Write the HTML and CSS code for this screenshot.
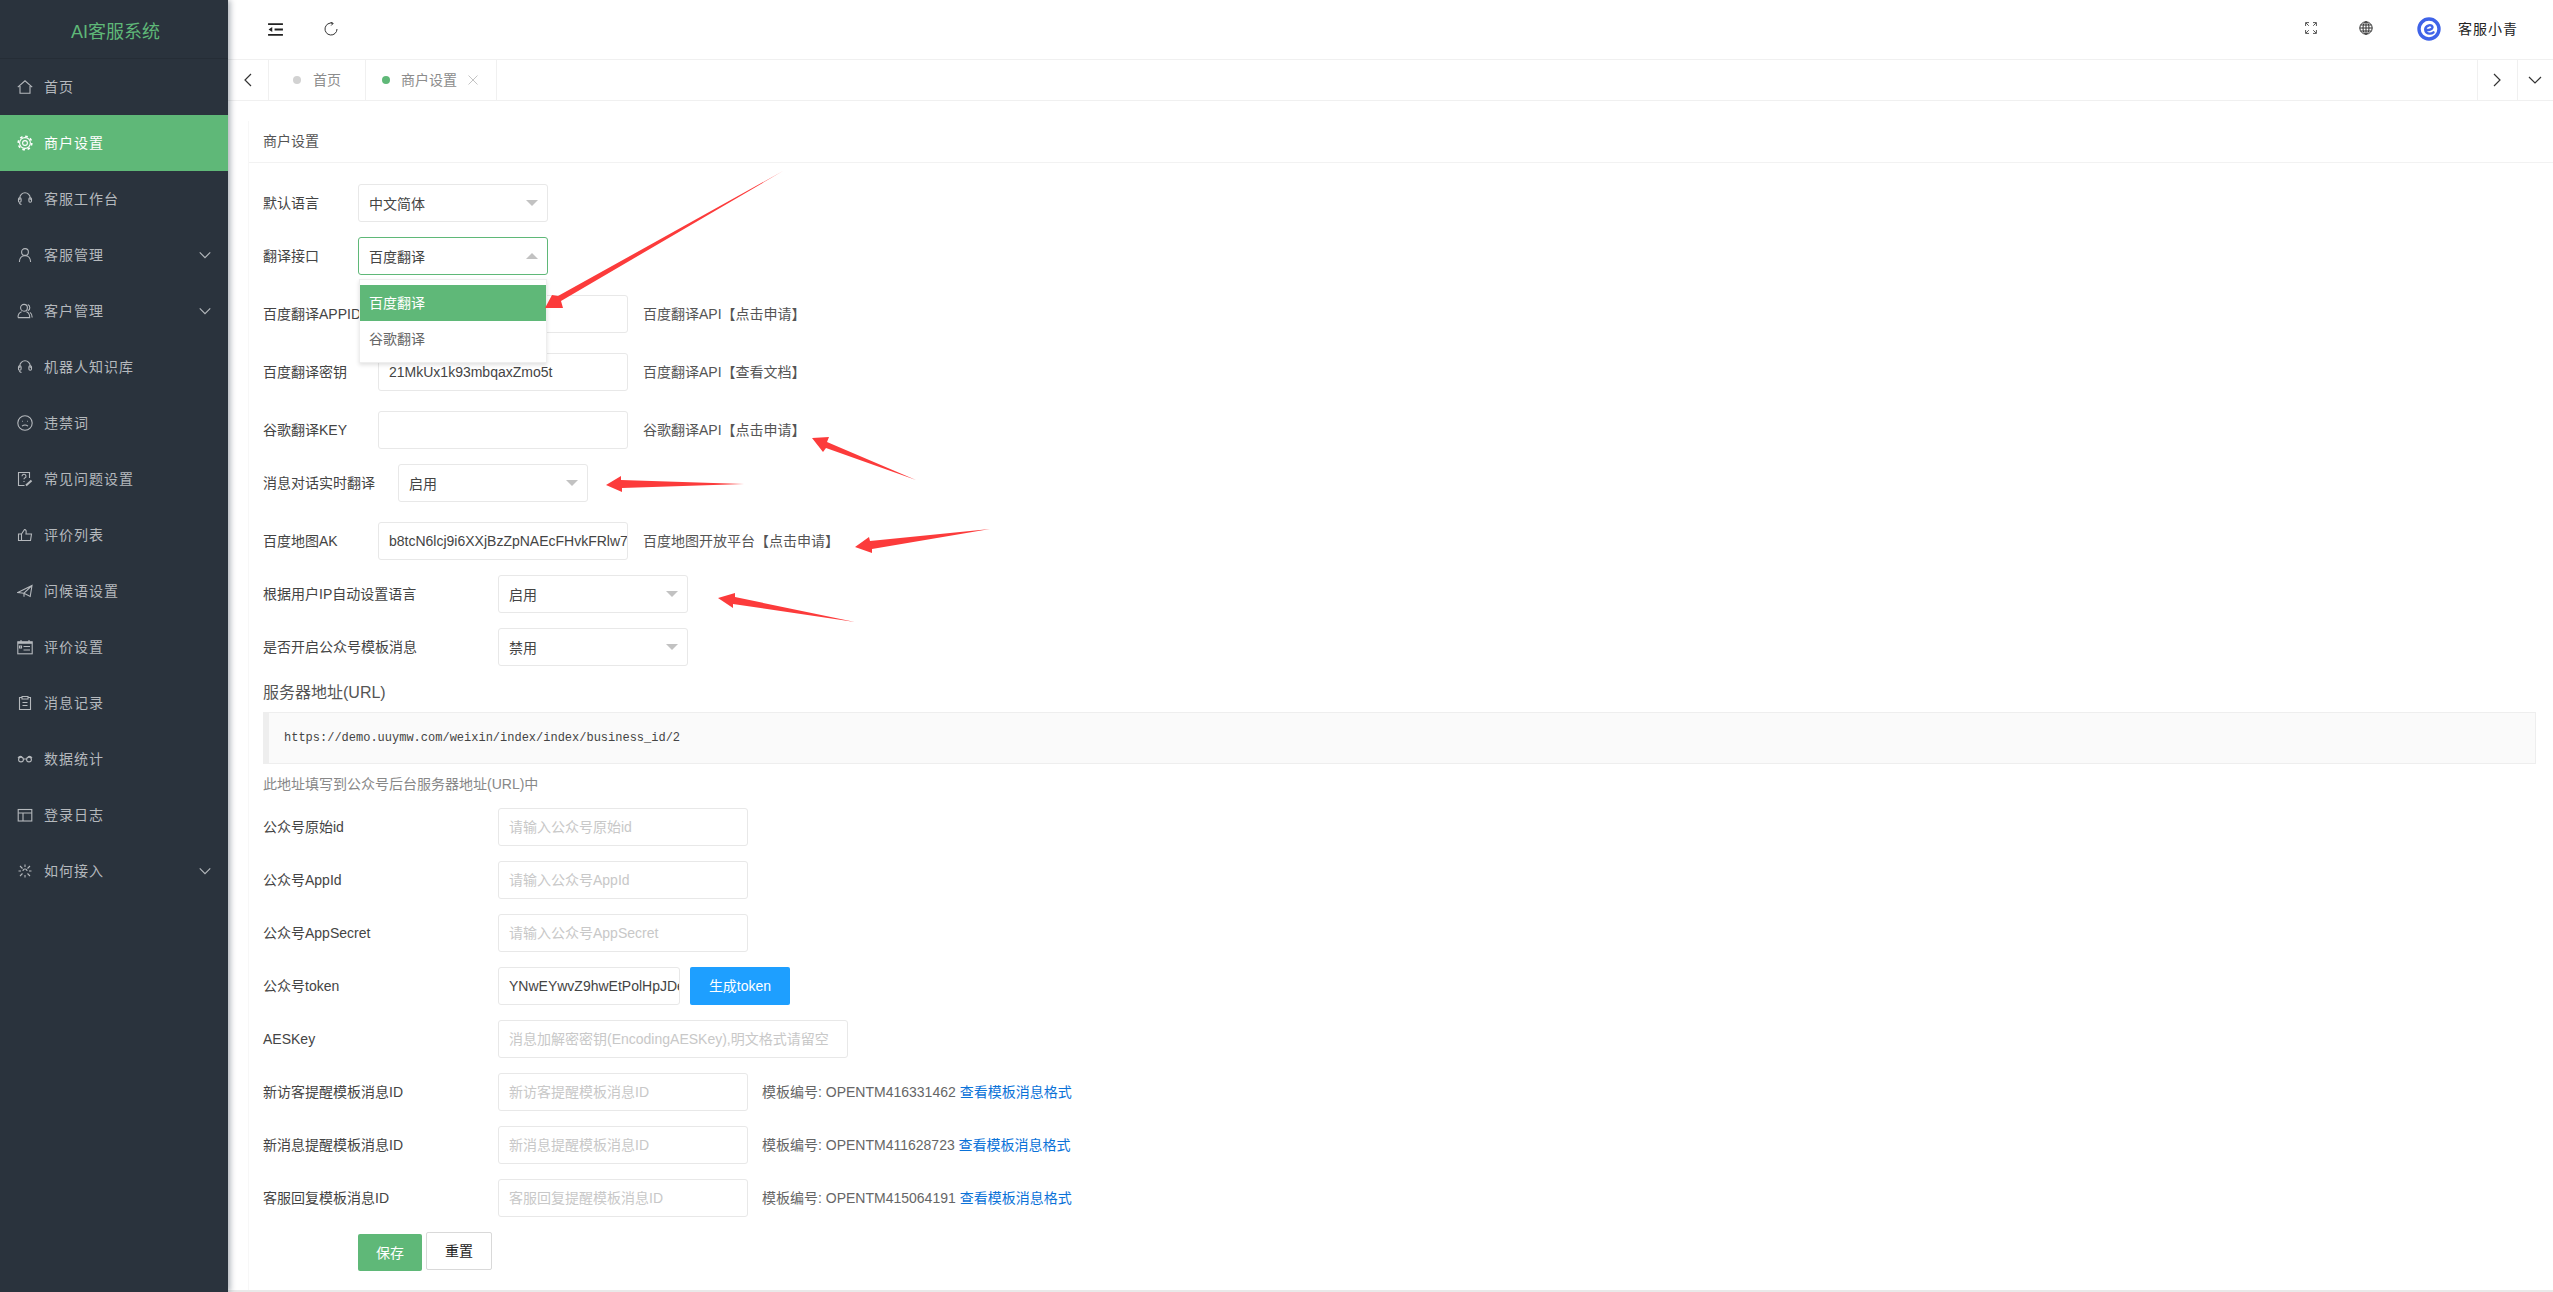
FILE: index.html
```html
<!DOCTYPE html>
<html lang="zh-CN">
<head>
<meta charset="utf-8">
<title>商户设置</title>
<link rel="stylesheet" href="styles.css">
</head>
<body>
<aside class="sidebar">
  <div class="brand">AI客服系统</div>
  <nav class="menu">
    <a class="item"><svg class="ic" viewBox="0 0 16 16"><path d="M.8 8.2 8 1.8l7.2 6.4M3 7v7.2h10V7"/></svg><span class="item-text">首页</span></a>
    <a class="item active"><svg class="ic" viewBox="0 0 16 16"><circle cx="8" cy="8" r="5.4"/><circle cx="8" cy="8" r="6.8" stroke-width="1.6" stroke-dasharray="2.6 2.74"/><circle cx="8" cy="8" r="2.4"/></svg><span class="item-text">商户设置</span></a>
    <a class="item"><svg class="ic" viewBox="0 0 16 16"><path d="M2.8 9V7a5.2 5.2 0 0 1 10.4 0v2M4.5 13.500c-1-.2-1.700-.7-2.200-1.500"/><rect x="1.500" y="6.800" width="2.600" height="4.400" rx="1.200"/><rect x="11.900" y="6.800" width="2.600" height="4.400" rx="1.200"/></svg><span class="item-text">客服工作台</span></a>
    <a class="item"><svg class="ic" viewBox="0 0 16 16"><circle cx="8" cy="5" r="3.400"/><path d="M2.400 15c0-3.800 2.300-6.400 5.600-6.400s5.600 2.600 5.600 6.400"/></svg><span class="item-text">客服管理</span><svg class="chev" viewBox="0 0 16 16"><path d="M2 5l6 6 6-6"/></svg></a>
    <a class="item"><svg class="ic" viewBox="0 0 16 16"><circle cx="7" cy="4.800" r="3.400"/><path d="M1 14.600c0-3 1.800-5.200 3.600-5.800M9.400 8.800c2 .6 3.300 3 3.300 5.800H1M10.800 1.600a3.400 3.400 0 0 1 0 6.200M13 9.400c1.400.9 2.200 2.800 2.200 5.200"/></svg><span class="item-text">客户管理</span><svg class="chev" viewBox="0 0 16 16"><path d="M2 5l6 6 6-6"/></svg></a>
    <a class="item"><svg class="ic" viewBox="0 0 16 16"><path d="M2.800 9V7a5.200 5.200 0 0 1 10.400 0v2M4.500 13.500c-1-.2-1.700-.7-2.200-1.500"/><rect x="1.500" y="6.800" width="2.600" height="4.400" rx="1.200"/><rect x="11.900" y="6.800" width="2.600" height="4.400" rx="1.200"/></svg><span class="item-text">机器人知识库</span></a>
    <a class="item"><svg class="ic" viewBox="0 0 16 16"><circle cx="8" cy="8" r="7.200"/><path d="M5 11.200c1.800-1.500 4.200-1.500 6 0M5.200 6.200h.8M10 6.200h.8"/></svg><span class="item-text">违禁词</span></a>
    <a class="item"><svg class="ic" viewBox="0 0 16 16"><path d="M12.500 7V1.500h-11v13h6M5 5.200a2 2 0 1 1 2.700 1.900c-.5.2-.7.5-.7 1.200M7 10v1"/><path d="M9 14.500l5.500-5" stroke-width="2"/></svg><span class="item-text">常见问题设置</span></a>
    <a class="item"><svg class="ic" viewBox="0 0 16 16"><path d="M1.500 7h3v6.500h-3zM4.500 7l3-4.500c1.500 0 2 1 1.500 4.500h5.500l-1 6.500h-9"/></svg><span class="item-text">评价列表</span></a>
    <a class="item"><svg class="ic" viewBox="0 0 16 16"><path d="M.8 9.500 15 2.500l-1.800 11L7 10.200zM7 10.200l8-7.700M7 10.200v3.500"/></svg><span class="item-text">问候语设置</span></a>
    <a class="item"><svg class="ic" viewBox="0 0 16 16"><rect x=".8" y="2.800" width="14.400" height="12"/><path d="M.8 3.800h14.400" stroke-width="2"/><path d="M4 1v2M12 1v2M6.500 7.500h6.500M6.500 11h6.500M2.500 7h2v2h-2z"/></svg><span class="item-text">评价设置</span></a>
    <a class="item"><svg class="ic" viewBox="0 0 16 16"><path d="M5 2.500H2.500v12h11v-12H11M5 1.500h6v2.500H5zM5.500 7.500h5M5.500 10.500h5"/></svg><span class="item-text">消息记录</span></a>
    <a class="item"><svg class="ic" viewBox="0 0 16 16"><circle cx="4" cy="8.500" r="2.400"/><circle cx="12" cy="8.500" r="2.400"/><path d="M6.400 8h3.200M1 7c1-1.500 2.500-2 4-1.200M11 5.800c1.500-.8 3-.3 4 1.200"/></svg><span class="item-text">数据统计</span></a>
    <a class="item"><svg class="ic" viewBox="0 0 16 16"><rect x="1.200" y="2.500" width="13.600" height="11.500"/><path d="M1.200 6h13.600M6 6v8"/></svg><span class="item-text">登录日志</span></a>
    <a class="item"><svg class="ic" viewBox="0 0 16 16"><path d="M3 3l2.500 2.500M13 3l-2.500 2.500M3 13l2.500-2.500M13 13l-2.500-2.500M8 1.500v2.500M1.500 8H4M12 8h2.500M8 12v2.500M6 8a2 2 0 0 1 4 0"/></svg><span class="item-text">如何接入</span><svg class="chev" viewBox="0 0 16 16"><path d="M2 5l6 6 6-6"/></svg></a>
  </nav>
</aside>

<main class="main">
  <header class="topbar">
    <div class="top-left">
      <svg class="tool-collapse" viewBox="0 0 16 14"><path class="thick" d="M0 1.200h16M0 12.800h16M7 7h9"/><path class="solid" d="M4.500 4.200v5.600L.5 7z"/></svg>
      <svg class="tool-refresh" viewBox="0 0 14 14"><path d="M8.800 1.300A6 6 0 1 0 13 7"/><path d="M6.500.2 9.200 1.400 7.200 3.500"/></svg>
    </div>
    <div class="top-right">
      <svg class="tool-full" viewBox="0 0 12 12"><path d="M.6 4V.6H4M.8.8l3 3M8 .6h3.400V4M11.200.8l-3 3M.6 8v3.400H4M.8 11.200l3-3M8 11.400h3.400V8M11.200 11.200l-3-3"/></svg>
      <svg class="tool-globe" viewBox="0 0 14 14"><circle cx="7" cy="7" r="6.200"/><ellipse cx="7" cy="7" rx="3" ry="6.200"/><path d="M7 .8v12.400M.8 7h12.400M1.600 4h10.800M1.600 10h10.800"/></svg>
      <svg class="avatar" viewBox="0 0 24 24"><circle cx="12" cy="12" r="10" class="ring"/><path class="swirl" d="M8.500 12.800c2.500.6 6.500.1 7-2.200.3-1.700-1.700-2.800-3.500-2.300-2.200.6-3.800 2.200-3.800 4.300 0 2.400 2.100 4 4.500 4 1.500 0 2.800-.4 3.800-1.300"/></svg>
      <span class="username">客服小青</span>
    </div>
  </header>

  <div class="tabs">
    <div class="tab-arrow"><svg class="tab-chev" viewBox="0 0 12 16"><path d="M9 2 3 8l6 6"/></svg></div>
    <div class="tab"><i class="dot"></i><span>首页</span></div>
    <div class="tab tab-current"><i class="dot dot-on"></i><span>商户设置</span><svg class="tab-x" viewBox="0 0 10 10"><path d="M.5.500l9 9M9.500.500l-9 9"/></svg></div>
    <div class="tab-space"></div>
    <div class="tab-arrow tab-arrow-r"><svg class="tab-chev" viewBox="0 0 12 16"><path d="M3 2l6 6-6 6"/></svg></div>
    <div class="tab-arrow tab-arrow-d"><svg class="tab-chev-d" viewBox="0 0 16 12"><path d="M2 3l6 6 6-6"/></svg></div>
  </div>

  <div class="content">
    <section class="panel">
      <div class="panel-head">商户设置</div>
      <div class="panel-body">
        <div class="row"><label class="lab w95">默认语言</label><div class="select"><span>中文简体</span><i class="tri"></i></div></div>

        <div class="row row-lg"><label class="lab w95">翻译接口</label>
          <div class="select select-open"><span>百度翻译</span><i class="tri tri-up"></i>
            <ul class="drop"><li class="opt opt-on">百度翻译</li><li class="opt">谷歌翻译</li></ul>
          </div>
        </div>

        <div class="row row-lg"><label class="lab w115">百度翻译APPID</label><input class="inp" type="text"><span class="aside-note">百度翻译API【点击申请】</span></div>
        <div class="row row-lg"><label class="lab w115">百度翻译密钥</label><input class="inp" type="text" value="21MkUx1k93mbqaxZmo5t"><span class="aside-note">百度翻译API【查看文档】</span></div>
        <div class="row"><label class="lab w115">谷歌翻译KEY</label><input class="inp" type="text"><span class="aside-note">谷歌翻译API【点击申请】</span></div>
        <div class="row row-lg"><label class="lab w135">消息对话实时翻译</label><div class="select"><span>启用</span><i class="tri"></i></div></div>
        <div class="row"><label class="lab w115">百度地图AK</label><input class="inp" type="text" value="b8tcN6lcj9i6XXjBzZpNAEcFHvkFRlw7"><span class="aside-note">百度地图开放平台【点击申请】</span></div>
        <div class="row"><label class="lab w235">根据用户IP自动设置语言</label><div class="select"><span>启用</span><i class="tri"></i></div></div>
        <div class="row row-end"><label class="lab w235">是否开启公众号模板消息</label><div class="select"><span>禁用</span><i class="tri"></i></div></div>

        <h3 class="sec-title">服务器地址(URL)</h3>
        <pre class="code">https://demo.uuymw.com/weixin/index/index/business_id/2</pre>
        <p class="tip">此地址填写到公众号后台服务器地址(URL)中</p>

        <div class="row"><label class="lab w235">公众号原始id</label><input class="inp" type="text" placeholder="请输入公众号原始id"></div>
        <div class="row"><label class="lab w235">公众号AppId</label><input class="inp" type="text" placeholder="请输入公众号AppId"></div>
        <div class="row"><label class="lab w235">公众号AppSecret</label><input class="inp" type="text" placeholder="请输入公众号AppSecret"></div>
        <div class="row"><label class="lab w235">公众号token</label><input class="inp inp-token" type="text" value="YNwEYwvZ9hwEtPolHpJDeKmZ"><button class="btn btn-blue" type="button">生成token</button></div>
        <div class="row"><label class="lab w235">AESKey</label><input class="inp inp-wide" type="text" placeholder="消息加解密密钥(EncodingAESKey),明文格式请留空"></div>
        <div class="row"><label class="lab w235">新访客提醒模板消息ID</label><input class="inp" type="text" placeholder="新访客提醒模板消息ID"><span class="tpl-note">模板编号: OPENTM416331462 <a class="link">查看模板消息格式</a></span></div>
        <div class="row"><label class="lab w235">新消息提醒模板消息ID</label><input class="inp" type="text" placeholder="新消息提醒模板消息ID"><span class="tpl-note">模板编号: OPENTM411628723 <a class="link">查看模板消息格式</a></span></div>
        <div class="row"><label class="lab w235">客服回复模板消息ID</label><input class="inp" type="text" placeholder="客服回复提醒模板消息ID"><span class="tpl-note">模板编号: OPENTM415064191 <a class="link">查看模板消息格式</a></span></div>

        <div class="actions"><button class="btn btn-save" type="button">保存</button><button class="btn btn-reset" type="button">重置</button></div>
      </div>
    </section>
  </div>
</main>

<svg class="annotations" viewBox="0 0 2553 1292" width="2553" height="1292">
  <polygon points="783,171 558,296 552,295 545,308 563,308 561,301"/>
  <polygon points="916,480 827,442 829,437 812,438 823,452 826,448"/>
  <polygon points="744,484 621,480 621,476 606,485 622,492 622,488"/>
  <polygon points="990,529 870,541 869,537 855,547 872,553 872,549"/>
  <polygon points="855,622 735,597 735,593 718,598 733,608 733,604"/>
</svg>
</body>
</html>
```
FILE: styles.css
```css
* { box-sizing: border-box; }
html, body { margin: 0; height: 100%; }
body {
  display: flex;
  height: 1292px;
  overflow: hidden;
  background: #fff;
  color: #444;
  font: 14px/20px "Liberation Sans", "Noto Sans CJK SC", sans-serif;
}

/* sidebar */
.sidebar {
  flex: 0 0 228px;
  background: #2a333d;
  box-shadow: 2px 0 6px rgba(0, 21, 41, .35);
  position: relative;
  z-index: 2;
}
.brand {
  height: 59px;
  border-bottom: 1px solid #252d36;
  color: #5fb878;
  font-size: 18px;
  line-height: 64px;
  text-align: center;
  padding-left: 3px;
}
.item {
  display: flex;
  align-items: center;
  height: 56px;
  padding: 0 16px 0 17px;
  color: #b5b9bd;
  letter-spacing: 1px;
}
.item.active { background: #5fb878; color: #fff; }
.item-text { margin-left: 11px; flex: 1; }
.ic { width: 16px; height: 16px; fill: none; stroke: currentColor; stroke-width: 1.1; flex: none; }
.chev { width: 14px; height: 14px; fill: none; stroke: currentColor; stroke-width: 1.3; flex: none; }

/* main */
.main {
  flex: 1;
  min-width: 0;
  height: 1292px;
  display: flex;
  flex-direction: column;
  border-bottom: 2px solid #e9e9e9;
}
.topbar {
  flex: 0 0 59px;
  display: flex;
  align-items: center;
  justify-content: space-between;
  padding: 0 35px 2px 40px;
}
.top-left, .top-right { display: flex; align-items: center; }
.tool-collapse { width: 15px; height: 13px; margin-top: 2px; }
.thick { fill: none; stroke: #222; stroke-width: 2; }
.solid { fill: #222; }
.tool-refresh { width: 14px; height: 14px; margin-left: 41px; margin-top: 1px; fill: none; stroke: #333; stroke-width: 1; }
.tool-full { width: 12px; height: 12px; fill: none; stroke: #555; stroke-width: 1; margin-top: -2px; }
.tool-globe { width: 14px; height: 14px; margin-left: 42px; fill: none; stroke: #333; stroke-width: 1; margin-top: -2px; }
.avatar { width: 24px; height: 24px; margin-left: 44px; fill: none; stroke: #3f63e8; }
.ring { stroke-width: 3.4; }
.swirl { stroke-width: 2.4; stroke-linecap: round; }
.username { margin-left: 17px; color: #222; letter-spacing: 1px; }

.tabs {
  flex: 0 0 42px;
  display: flex;
  border-top: 1px solid #f0f0f0;
  border-bottom: 1px solid #f0f0f0;
}
.tab-arrow {
  flex: 0 0 40px;
  display: flex;
  align-items: center;
  justify-content: center;
  padding-right: 1px;
}
.tab-arrow-r { border-left: 1px solid #f0f0f0; }
.tab-arrow-d { flex-basis: 36px; border-left: 1px solid #f0f0f0; }
.tab-chev { width: 12px; height: 16px; fill: none; stroke: #333; stroke-width: 1.2; }
.tab-chev-d { width: 16px; height: 12px; fill: none; stroke: #333; stroke-width: 1.2; }
.tab {
  display: flex;
  align-items: center;
  flex: none;
  padding: 0 24px;
  white-space: nowrap;
  border-left: 1px solid #f0f0f0;
  color: #8c8c8c;
}
.tab-current { padding: 0 18px 0 15px; }
.tab-current + .tab-space { border-left: 1px solid #f0f0f0; }
.dot { width: 8px; height: 8px; border-radius: 50%; background: #d2d2d2; margin-right: 12px; }
.dot-on { background: #5fb878; margin-left: 1px; margin-right: 11px; }
.tab-x { width: 10px; height: 10px; margin-left: 11px; fill: none; stroke: #c4c4c4; stroke-width: 1; }
.tab-space { flex: 1; }

.content { flex: 1; padding: 20px 0 0 20px; min-height: 0; }
.panel { height: 100%; border-left: 1px solid #f7f7f7; }
.panel-head {
  height: 42px;
  line-height: 41px;
  padding-left: 14px;
  border-bottom: 1px solid #f2f2f2;
  color: #555;
}
.panel-body { padding: 21px 17px 0 14px; }

.row { display: flex; align-items: center; margin-bottom: 15px; }
.row-lg { margin-bottom: 20px; }
.row-end { margin-bottom: 14px; }
.lab { flex: none; white-space: nowrap; color: #444; }
.w95 { width: 95px; }
.w115 { width: 115px; }
.w135 { width: 135px; }
.w235 { width: 235px; }

.select {
  position: relative;
  width: 190px;
  height: 38px;
  flex: none;
  display: flex;
  align-items: center;
  justify-content: space-between;
  padding: 2px 9px 0 10px;
  border: 1px solid #e8e8e8;
  border-radius: 3px;
  color: #444;
}
.select-open { border-color: #5fb878; }
.tri {
  width: 0;
  height: 0;
  margin-top: -2px;
  border-left: 6px solid transparent;
  border-right: 6px solid transparent;
  border-top: 6px solid #c2c2c2;
}
.tri-up { border-top: 0; border-bottom: 6px solid #c2c2c2; }
.drop {
  position: absolute;
  z-index: 3;
  top: 41px;
  left: 0;
  right: 0;
  margin: 0;
  padding: 5px 0;
  list-style: none;
  background: #fff;
  border: 1px solid #eee;
  box-shadow: 0 2px 4px rgba(0, 0, 0, .12);
}
.opt { height: 36px; line-height: 36px; padding: 0 9px; color: #666; }
.opt-on { background: #5fb878; color: #fff; }

.inp {
  flex: none;
  width: 250px;
  height: 38px;
  padding: 0 0 0 10px;
  border: 1px solid #e8e8e8;
  border-radius: 3px;
  outline: 0;
  background: #fff;
  color: #444;
  font: inherit;
}
.inp::placeholder { color: #c8c8c8; }
.inp-token { width: 182px; }
.inp-wide { width: 350px; }
.aside-note { margin-left: 15px; color: #555; white-space: nowrap; }
.tpl-note { margin-left: 14px; color: #666; white-space: nowrap; }
.link { color: #0a72d8; }

.sec-title { margin: 15px 0 7px; font-size: 16px; font-weight: 400; line-height: 24px; color: #555; }
.code {
  margin: 0;
  height: 52px;
  padding: 15px;
  border: 1px solid #eee;
  border-left-width: 6px;
  background: #fafafa;
  color: #444;
  font: 12px/20px "Liberation Mono", monospace;
}
.tip { margin: 10px 0 14px; color: #888; }

.btn { height: 38px; border-radius: 2px; font: inherit; padding: 0; cursor: pointer; }
.btn-blue { width: 100px; margin-left: 10px; border: 0; background: #1e9fff; color: #fff; }
.actions { display: flex; align-items: flex-start; padding-left: 95px; }
.btn-save { width: 64px; height: 37px; margin-top: 2px; border: 0; background: #5fb878; color: #fff; }
.btn-reset { width: 66px; margin-left: 4px; border: 1px solid #d9d9d9; background: #fff; color: #222; }

.annotations { position: absolute; top: 0; left: 0; z-index: 5; pointer-events: none; }
.annotations polygon { fill: #fc3b3b; }
```
